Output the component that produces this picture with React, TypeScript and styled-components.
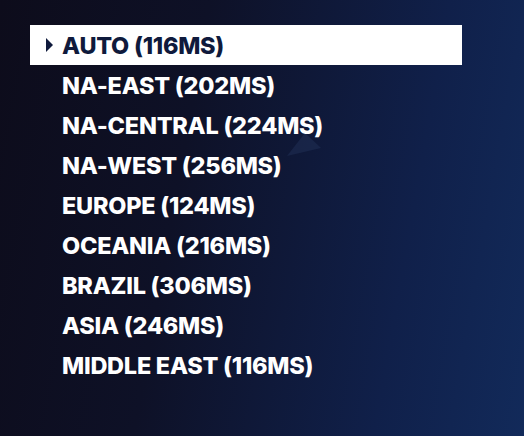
import React from "react";
import styled, { createGlobalStyle } from "styled-components";

const Global = createGlobalStyle`
  html, body { margin: 0; padding: 0; }
  body { width: 524px; height: 436px; overflow: hidden; }
`;

const Page = styled.div`
  position: relative;
  width: 524px;
  height: 436px;
  box-sizing: border-box;
  padding: 25px 0 0 30px;
  background: linear-gradient(100deg, #0d0c1b 0%, #0e1127 35%, #10204a 75%, #122a5a 100%);
  font-family: Inter, "Noto Sans", sans-serif;
  overflow: hidden;
`;

const Shard = styled.svg`
  position: absolute;
  left: 0;
  top: 0;
  width: 524px;
  height: 436px;
  pointer-events: none;
`;

const List = styled.ul`
  position: relative;
  list-style: none;
  margin: 0;
  padding: 0;
  width: 432px;
  display: flex;
  flex-direction: column;
`;

const Item = styled.li<{ $active?: boolean }>`
  height: 40px;
  display: flex;
  align-items: center;
  padding-left: 16px;
  gap: 9px;
  background: ${(p) => (p.$active ? "#ffffff" : "transparent")};
  color: ${(p) => (p.$active ? "#0f1a3c" : "#ffffff")};
  font-weight: 800;
  font-size: 23.5px;
  letter-spacing: -0.25px;
  text-transform: uppercase;
`;

const Arrow = styled.span<{ $show?: boolean }>`
  width: 0;
  height: 0;
  border-top: 7px solid transparent;
  border-bottom: 7px solid transparent;
  border-left: 7px solid ${(p) => (p.$show ? "#0f1a3c" : "transparent")};
`;

const regions = [
  "AUTO (116MS)",
  "NA-EAST (202MS)",
  "NA-CENTRAL (224MS)",
  "NA-WEST (256MS)",
  "EUROPE (124MS)",
  "OCEANIA (216MS)",
  "BRAZIL (306MS)",
  "ASIA (246MS)",
  "MIDDLE EAST (116MS)",
];

export default function App() {
  return (
    <Page>
      <Global />
      <Shard viewBox="0 0 524 436">
        <polygon points="287,156 321,148 305,133" fill="#26365f" opacity="0.4" />
      </Shard>
      <List>
        {regions.map((r, i) => (
          <Item key={r} $active={i === 0}>
            <Arrow $show={i === 0} />
            <span>{r}</span>
          </Item>
        ))}
      </List>
    </Page>
  );
}
